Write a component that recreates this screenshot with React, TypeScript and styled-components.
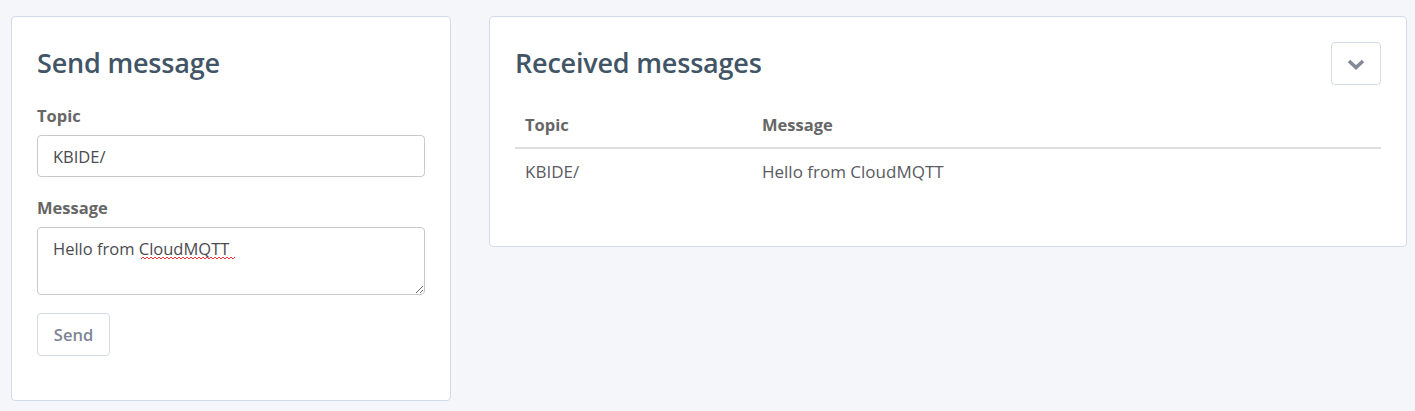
import React from "react";
import styled, { createGlobalStyle } from "styled-components";

const Global = createGlobalStyle`
  html, body { margin: 0; padding: 0; background: #f5f6fa; }
  body { font-family: "Open Sans", "Noto Sans", sans-serif; color: #555; }
  * { box-sizing: border-box; }
`;

const Page = styled.div`
  display: grid;
  grid-template-columns: 440px 918px;
  gap: 38px;
  align-items: start;
  padding: 16px 8px 10px 11px;
`;

const Card = styled.section<{ $pb: number }>`
  background: #fff;
  border: 1px solid #d3dae8;
  border-radius: 4px;
  padding: 29px 25px ${(p) => p.$pb}px 25px;
`;

const CardHeader = styled.div`
  display: flex;
  justify-content: space-between;
  align-items: flex-start;
`;

const Title = styled.h2`
  margin: 0;
  font-size: 27px;
  line-height: 34px;
  font-weight: 600;
  color: #415566;
  letter-spacing: -0.2px;
`;

const Label = styled.label`
  display: block;
  font-size: 16.5px;
  font-weight: 700;
  color: #666;
  line-height: 22px;
  margin: 0 0 8px;
`;

const Field = styled.div<{ $mt: number }>`
  margin-top: ${(p) => p.$mt}px;
`;

const Input = styled.input`
  display: block;
  width: 388px;
  height: 42px;
  padding: 0 15px;
  border: 1px solid #c9c9cc;
  border-radius: 4px;
  font: inherit;
  font-size: 16.5px;
  color: #4b4b50;
  background: #fff;
  outline: none;
`;

const AreaWrap = styled.div`
  position: relative;
  width: 388px;
`;

const TextArea = styled.textarea`
  display: block;
  width: 388px;
  height: 68px;
  padding: 9px 15px;
  border: 1px solid #c9c9cc;
  border-radius: 4px;
  font: inherit;
  font-size: 16.5px;
  line-height: 24px;
  color: #4b4b50;
  resize: vertical;
  outline: none;
`;

const Squiggle = styled.svg`
  position: absolute;
  left: 104px;
  top: 29px;
  pointer-events: none;
`;

const Button = styled.button`
  margin-top: 18px;
  height: 43px;
  width: 73px;
  border: 1px solid #d3dae8;
  border-radius: 4px;
  background: #fff;
  font: inherit;
  font-size: 16.5px;
  font-weight: 600;
  color: #7d8595;
  cursor: pointer;
`;

const IconButton = styled.button`
  width: 50px;
  height: 43px;
  margin-top: -4px;
  border: 1px solid #d3dae8;
  border-radius: 4px;
  background: #fff;
  display: flex;
  align-items: center;
  justify-content: center;
  padding: 0;
`;

const Table = styled.table`
  width: 100%;
  margin-top: 22px;
  border-collapse: collapse;
  font-size: 17px;
`;

const Th = styled.th<{ $w?: string }>`
  text-align: left;
  font-weight: 700;
  font-size: 16.5px;
  color: #666;
  padding: 7px 10px 11px;
  width: ${(p) => p.$w ?? "auto"};
  border-bottom: 2px solid #dedede;
  line-height: 22px;
`;

const Td = styled.td`
  color: #5a5a5f;
  padding: 12px 10px 9px;
  line-height: 22px;
`;

export default function App() {
  return (
    <>
      <Global />
      <Page>
        <Card $pb={44}>
          <Title>Send message</Title>
          <Field $mt={25}>
            <Label>Topic</Label>
            <Input defaultValue="KBIDE/" />
          </Field>
          <Field $mt={20}>
            <Label>Message</Label>
            <AreaWrap>
              <TextArea defaultValue="Hello from CloudMQTT" spellCheck={false} />
              <Squiggle width="95" height="4" viewBox="0 0 95 4" aria-hidden="true">
                <path
                  d="M0 3 L2 1 L4 3 L6 1 L8 3 L10 1 L12 3 L14 1 L16 3 L18 1 L20 3 L22 1 L24 3 L26 1 L28 3 L30 1 L32 3 L34 1 L36 3 L38 1 L40 3 L42 1 L44 3 L46 1 L48 3 L50 1 L52 3 L54 1 L56 3 L58 1 L60 3 L62 1 L64 3 L66 1 L68 3 L70 1 L72 3 L74 1 L76 3 L78 1 L80 3 L82 1 L84 3 L86 1 L88 3 L90 1 L92 3 L94 1"
                  fill="none"
                  stroke="#e8333a"
                  strokeWidth="1"
                />
              </Squiggle>
            </AreaWrap>
          </Field>
          <Button>Send</Button>
        </Card>
        <Card $pb={54}>
          <CardHeader>
            <Title>Received messages</Title>
            <IconButton aria-label="Toggle">
              <svg width="18" height="12" viewBox="0 0 18 12">
                <polyline
                  points="2,3 9,9.5 16,3"
                  fill="none"
                  stroke="#838a98"
                  strokeWidth="3.6"
                  strokeLinejoin="miter"
                />
              </svg>
            </IconButton>
          </CardHeader>
          <Table>
            <thead>
              <tr>
                <Th $w="237px">Topic</Th>
                <Th>Message</Th>
              </tr>
            </thead>
            <tbody>
              <tr>
                <Td>KBIDE/</Td>
                <Td>Hello from CloudMQTT</Td>
              </tr>
            </tbody>
          </Table>
        </Card>
      </Page>
    </>
  );
}
